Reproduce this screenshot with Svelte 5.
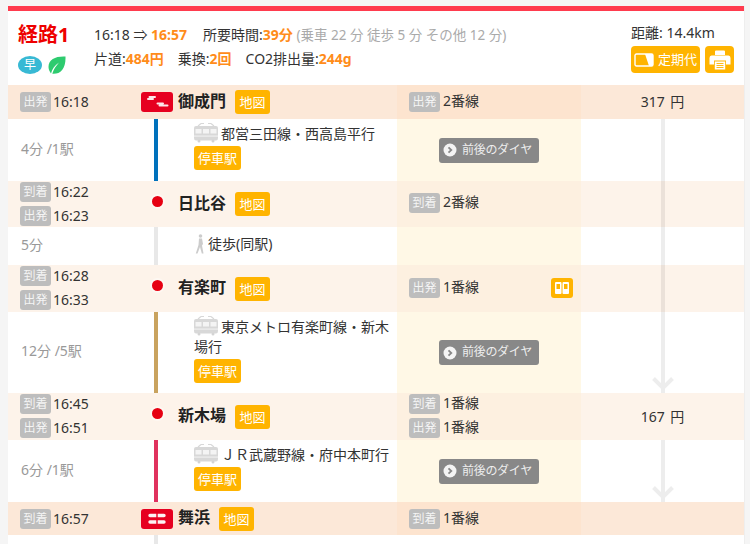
<script>
  const Stop = 'stop';
</script>

{#snippet tag(t)}<span class="tag">{t}</span>{/snippet}

{#snippet train()}
  <svg class="train" viewBox="0 0 26 20" width="26" height="20">
    <path d="M5 3 L8 0.5 M21 3 L18 0.5 M8 .5 h3 M15 .5 h3" stroke="#d8d8d8" stroke-width="1.2" fill="none"/>
    <path d="M1 5 Q1 3 3 3 H23 Q25 3 25 5 V15 Q25 17.5 23 17.5 H3 Q1 17.5 1 15Z" fill="#d8d8d8"/>
    <rect x="2.5" y="6" width="6" height="4.5" fill="#f4f4f4"/>
    <rect x="10" y="6" width="6" height="4.5" fill="#f4f4f4"/>
    <rect x="17.5" y="6" width="6" height="4.5" fill="#f4f4f4"/>
    <rect x="1" y="12.5" width="24" height="1.2" fill="#f0f0f0"/>
    <circle cx="6" cy="18" r="1.5" fill="#d4d4d4"/><circle cx="20" cy="18" r="1.5" fill="#d4d4d4"/>
  </svg>
{/snippet}

{#snippet dia()}
  <div class="dia"><svg viewBox="0 0 14 14" width="14" height="14"><circle cx="7" cy="7" r="6.5" fill="#f4f4f4"/><path d="M5.5 4.3 L8.3 7 L5.5 9.7" fill="none" stroke="#888" stroke-width="1.8"/></svg>前後のダイヤ</div>
{/snippet}

{#snippet dot()}<span class="dotwrap"><span class="dot"></span></span>{/snippet}

<div class="card">
  <header>
    <div class="title">
      <div class="route">経路1</div>
      <div class="badges">
        <span class="early">早</span>
        <svg viewBox="0 0 18 18" width="18" height="18"><path d="M17.5 .5 C8 0 .5 3 .5 11 C.5 14 2 16 3 17.5 C4 13 7 9 11 6.5 C8 10 5.5 13.5 4.3 17.7 C12 18.5 18 13 17.5 .5Z" fill="#2ecb6f"/></svg>
      </div>
    </div>
    <div class="summary">
      <div>16:18 ⇒ <b>16:57</b><span class="sp1">所要時間:<b>39分</b></span> <span class="muted">(乗車 22 分 徒歩 5 分 その他 12 分)</span></div>
      <div class="second">片道:<b>484円</b><span class="sp2">乗換:<b>2回</b></span><span class="sp2">CO2排出量:<b>244g</b></span></div>
    </div>
    <div class="tools">
      <div class="dist">距離: 14.4km</div>
      <div class="btns">
        <span class="btn pass"><svg viewBox="0 0 20 14" width="20" height="14"><rect x="1" y="1" width="18" height="12" rx="1.5" fill="none" stroke="#fff" stroke-width="1.4"/><path d="M11 1 H19 V13 H15Z" fill="#fff"/></svg>定期代</span>
        <span class="btn print"><svg viewBox="0 0 22 20" width="22" height="20"><path d="M6 5 V1.5 Q6 .5 7 .5 H15 Q16 .5 16 1.5 V5Z M2.5 5.5 H19.5 Q21.5 5.5 21.5 8 V14.5 H17 V10.5 H5 V14.5 H.5 V8 Q.5 5.5 2.5 5.5Z M5.8 11.5 H16.2 V19.5 H5.8Z" fill="#fff"/><path d="M7.5 13.5 H14.5 M7.5 15.5 H14.5 M7.5 17.5 H14.5" stroke="#ffb400" stroke-width=".9"/></svg></span>
      </div>
    </div>
  </header>

  <div class="table">
    <svg class="fare-arrow a1" width="22" height="274"><path d="M11 0 V274 M1.5 259.5 L11 269 L20.5 259.5" fill="none" stroke="#000" stroke-opacity=".07" stroke-width="4"/></svg>
    <svg class="fare-arrow a2" width="22" height="62"><path d="M11 0 V62 M1.5 47.5 L11 57 L20.5 47.5" fill="none" stroke="#000" stroke-opacity=".07" stroke-width="4"/></svg>

    <div class="row term h34">
      <div class="time"><div>{@render tag('出発')}16:18</div></div>
      <div class="place">
        <svg class="mark" viewBox="0 0 32 20" width="32" height="20"><rect width="32" height="20" rx="3" fill="#e60020"/><path d="M8.5 5 H14 M7 7 H12 M16.5 11.5 H22 M18.5 13.5 H26.5" stroke="#fff" stroke-width="2" stroke-linecap="round" opacity=".9"/></svg>
        <span class="name">御成門</span><span class="map">地図</span>
      </div>
      <div class="plat"><div>{@render tag('出発')}2番線</div></div>
      <div class="fare">317 円</div>
    </div>

    <div class="row seg h62">
      <div class="dur">4分 /1駅</div>
      <div class="line blue"><div class="info">{@render train()}都営三田線・西高島平行<div><span class="stops">停車駅</span></div></div></div>
      <div class="plat mid">{@render dia()}</div>
      <div class="fare"></div>
    </div>

    <div class="row stn h46">
      <div class="time"><div>{@render tag('到着')}16:22</div><div>{@render tag('出発')}16:23</div></div>
      <div class="place">{@render dot()}<span class="name">日比谷</span><span class="map">地図</span></div>
      <div class="plat top"><div>{@render tag('到着')}2番線</div></div>
      <div class="fare"></div>
    </div>

    <div class="row seg h38">
      <div class="dur">5分</div>
      <div class="line gray"><div class="info walk">
        <svg viewBox="0 0 10 20" width="10" height="20"><circle cx="5.5" cy="2" r="1.8" fill="#ccc"/><path d="M4 4.5 H7 L8 10 L7 11.5 L8.5 19.5 H6.8 L5 13 L2.5 19.5 H.8 L3.5 11 Z" fill="#ccc"/></svg>徒歩(同駅)</div></div>
      <div class="plat mid"></div>
      <div class="fare"></div>
    </div>

    <div class="row stn h47">
      <div class="time"><div>{@render tag('到着')}16:28</div><div>{@render tag('出発')}16:33</div></div>
      <div class="place">{@render dot()}<span class="name">有楽町</span><span class="map">地図</span></div>
      <div class="plat top lower"><div>{@render tag('出発')}1番線</div>
        <span class="door"><svg viewBox="0 0 16 14" width="16" height="14"><rect x="1" y="1" width="6.5" height="12" rx="1" fill="#fff"/><rect x="8.5" y="1" width="6.5" height="12" rx="1" fill="#fff"/><rect x="2.5" y="3" width="3.5" height="5" fill="#ffb400"/><rect x="10" y="3" width="3.5" height="5" fill="#ffb400"/></svg></span>
      </div>
      <div class="fare"></div>
    </div>

    <div class="row seg h81">
      <div class="dur">12分 /5駅</div>
      <div class="line tan"><div class="info">{@render train()}東京メトロ有楽町線・新木場行<div><span class="stops">停車駅</span></div></div></div>
      <div class="plat mid">{@render dia()}</div>
      <div class="fare"></div>
    </div>

    <div class="row stn h47">
      <div class="time"><div>{@render tag('到着')}16:45</div><div>{@render tag('出発')}16:51</div></div>
      <div class="place">{@render dot()}<span class="name">新木場</span><span class="map">地図</span></div>
      <div class="plat two"><div>{@render tag('到着')}1番線</div><div>{@render tag('出発')}1番線</div></div>
      <div class="fare">167 円</div>
    </div>

    <div class="row seg h62">
      <div class="dur">6分 /1駅</div>
      <div class="line red"><div class="info">{@render train()}ＪＲ武蔵野線・府中本町行<div><span class="stops">停車駅</span></div></div></div>
      <div class="plat mid">{@render dia()}</div>
      <div class="fare"></div>
    </div>

    <div class="row term h33">
      <div class="time"><div>{@render tag('到着')}16:57</div></div>
      <div class="place">
        <svg class="mark" viewBox="0 0 32 20" width="32" height="20"><rect width="32" height="20" rx="3" fill="#e60020"/><path d="M9 6.5 H23 M9 13 H23" stroke="#fff" stroke-width="3.4" stroke-linecap="round" opacity=".95"/><path d="M16 3 V17" stroke="#e60020" stroke-width="1.4"/></svg>
        <span class="name">舞浜</span><span class="map">地図</span>
      </div>
      <div class="plat"><div>{@render tag('到着')}1番線</div></div>
      <div class="fare"></div>
    </div>

    <div class="row seg h20">
      <div class="dur"></div>
      <div class="line gray"></div>
      <div class="plat mid blank"></div>
      <div class="fare"></div>
    </div>
  </div>
</div>

<style>
  :global(body) { margin: 0; background: #f5f5f5; height: 544px; overflow: hidden; }
  .card {
    margin: 6px 6px 0 8px;
    background: #fff;
    border-top: 5px solid #ff3b4e;
    box-shadow: 1px 0 0 #eee;
    font: 14px/1.4 "Noto Sans", "Noto Sans CJK JP", sans-serif;
    color: #333;
    height: 533px;
  }
  header { display: flex; height: 74px; box-sizing: border-box; padding: 13px 9px 0 10px; }
  .title { width: 76px; }
  .route { color: #ee0000; font-size: 20px; font-weight: 700; line-height: 22px; }
  .badges { display: flex; align-items: center; gap: 6px; margin-top: 10px; }
  .early { width: 24px; height: 18px; border-radius: 50%; background: #38b9d4; color: #fff; font-size: 12px; line-height: 18px; text-align: center; }
  .summary { flex: 1; padding-top: 1px; }
  .summary b { color: #ff8c1a; }
  .second { margin-top: 4px; }
  .sp1 { margin-left: 16px; }
  .sp2 { margin-left: 14px; }
  .muted { color: #aaa; font-size: 13.5px; }
  .tools { width: 104px; margin-top: -1px; }
  .dist { font-size: 14px; line-height: 20px; }
  .btns { display: flex; gap: 5px; margin-top: 3px; }
  .btn { background: #ffb400; color: #fff; border-radius: 4px; height: 27px; display: flex; align-items: center; justify-content: center; gap: 4px; font-size: 13px; }
  .pass { width: 69px; }
  .print { width: 29px; }

  .table { position: relative; }
  .row { display: grid; grid-template-columns: 132px 257px 184px 1fr; position: relative; z-index: 0; }
  .h20 { height: 20px; } .h33 { height: 33px; } .h34 { height: 34px; } .h38 { height: 38px; }
  .h46 { height: 46px; } .h47 { height: 47px; } .h62 { height: 62px; } .h81 { height: 81px; }
  .term { background: #fce8d8; }
  .stn { background: #fdf3ea; }
  .time { padding-left: 12px; display: flex; flex-direction: column; justify-content: center; gap: 4px; }
  .stn .time, .plat.two { justify-content: flex-start; padding-top: 1px; }
  .time > div { display: flex; align-items: center; height: 20px; }
  .plat:not(.mid) > div { display: flex; align-items: flex-start; height: 20px; line-height: 18px; }
  .tag { display: inline-block; flex: none; width: 31px; height: 20px; border-radius: 3px; background: #bdbdbd; color: #f4f4f4; font-size: 12px; line-height: 19px; text-align: center; margin-right: 2px; }
  .plat .tag { margin-right: 3px; }
  .place { display: flex; align-items: center; position: relative; }
  .mark { position: absolute; left: 1px; top: calc(50% - 10px); }
  .dotwrap { position: absolute; left: 9px; top: calc(50% - 10px); width: 16px; height: 14px; display: flex; align-items: center; justify-content: center; }
  .dot { width: 11px; height: 11px; border-radius: 50%; background: #e60012; box-shadow: 0 0 0 2px #fff6; }
  .name { margin-left: 38px; font-size: 16px; font-weight: 700; color: #222; position: relative; top: -1px; }
  .map { margin-left: 9px; width: 35px; height: 24px; border-radius: 3px; background: #ffb400; color: #fff; font-size: 13px; line-height: 24px; text-align: center; }
  .plat { background: #fff8e6; padding-left: 12px; display: flex; flex-direction: column; justify-content: center; gap: 4px; position: relative; box-sizing: border-box; }
  .term .plat { background: #fde4cf; }
  .stn .plat { background: #fdf0e0; }
  .plat.top { justify-content: flex-start; padding-top: 12px; }
  .plat.lower { padding-top: 13px; }
  .plat.mid { align-items: center; padding: 0; }
  .plat.blank { background: #fff; }
  .door { position: absolute; right: 8px; top: 13px; width: 22px; height: 20px; border-radius: 3px; background: #ffb400; display: flex; align-items: center; justify-content: center; }
  .fare { text-align: center; align-self: center; word-spacing: 2px; }
  .dur { color: #999; padding: 0 0 3px 13px; align-self: center; }
  .line { border-left: 4px solid; margin-left: 14px; }
  .blue { border-color: #0071bc; }
  .gray { border-color: #e8e8e8; }
  .tan { border-color: #c9a35f; }
  .red { border-color: #e0325e; }
  .info { padding: 4px 0 0 36px; line-height: 20px; }
  .walk { display: flex; align-items: center; gap: 3px; padding-top: 7px; padding-left: 37px; }
  .train { vertical-align: -4px; margin-right: 2px; margin-left: -1px; }
  .stops { display: inline-block; width: 47px; height: 24px; margin-top: 2px; border-radius: 3px; background: #ffb400; color: #fff; font-size: 13px; line-height: 24px; text-align: center; }
  .dia { width: 100px; height: 25px; padding-left: 4px; box-sizing: border-box; border-radius: 3px; background: #888; color: #eee; font-size: 12px; letter-spacing: -.3px; display: flex; align-items: center; gap: 5px; }
  .fare-arrow { position: absolute; left: 644px; z-index: 1; }
  .a1 { top: 34px; }
  .a2 { top: 355px; }
</style>
